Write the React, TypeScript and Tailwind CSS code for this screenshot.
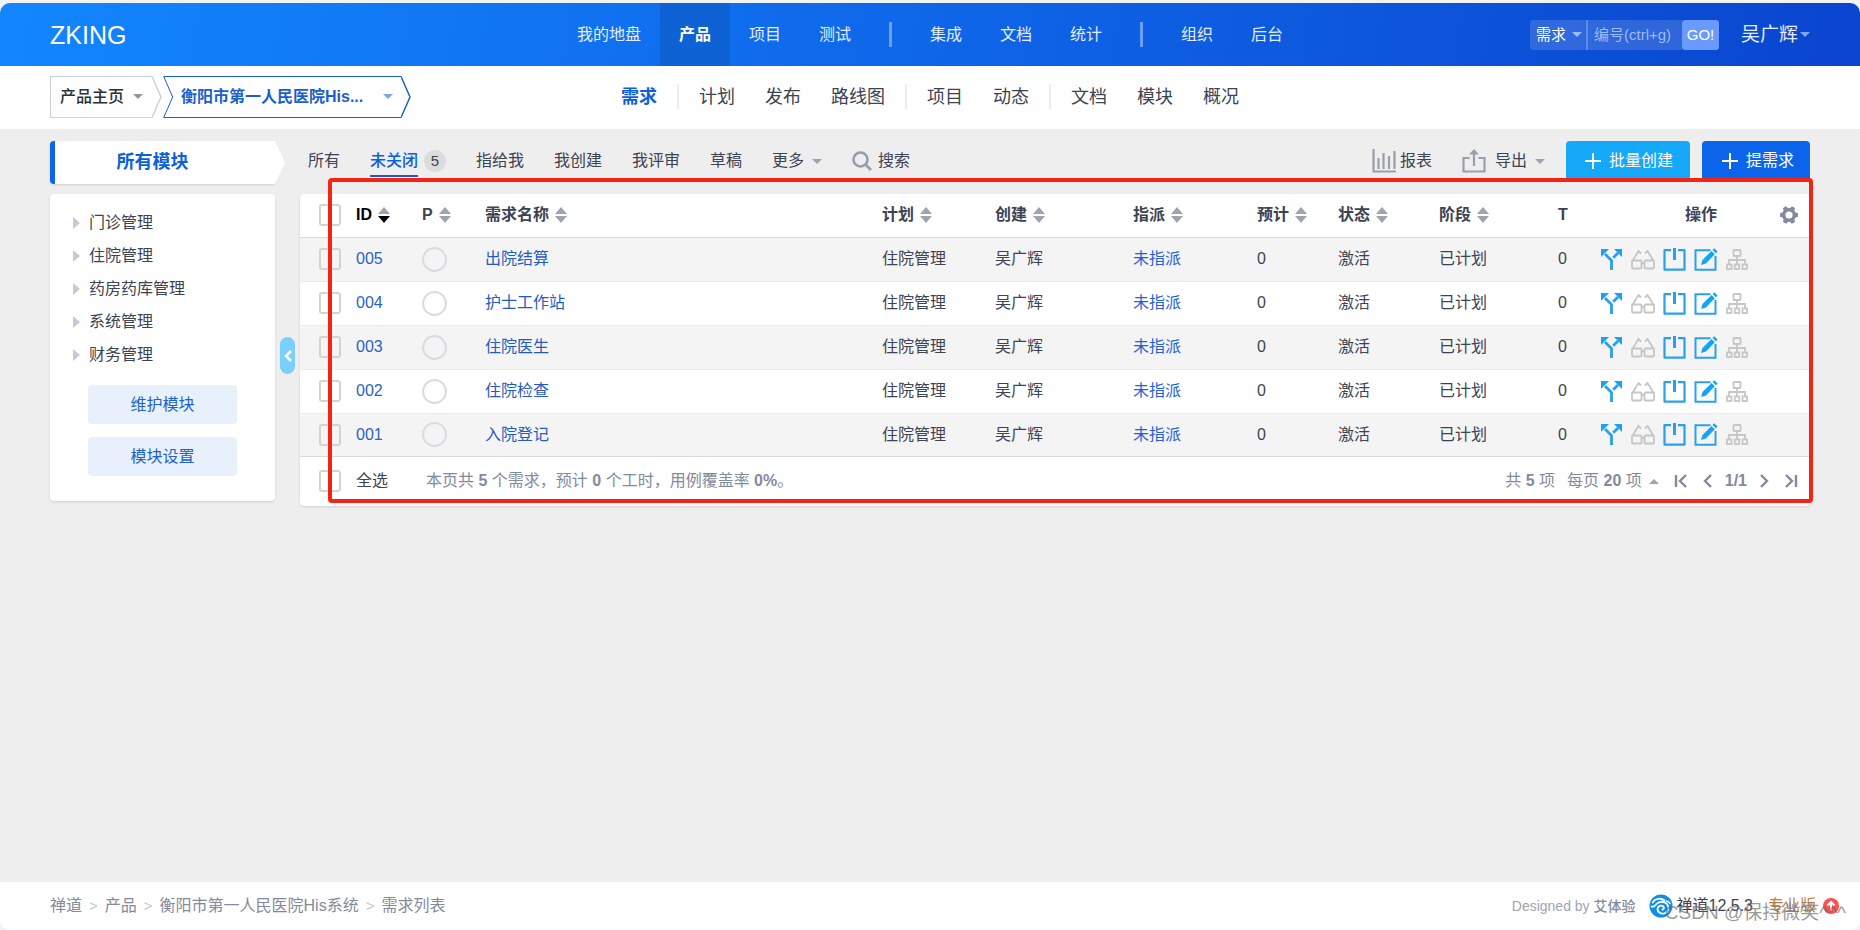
import { useState } from 'react';
import type { ReactNode } from 'react';

type Story = { id: string; title: string; plan: string; author: string };

const stories: Story[] = [
  { id: '005', title: '出院结算', plan: '住院管理', author: '吴广辉' },
  { id: '004', title: '护士工作站', plan: '住院管理', author: '吴广辉' },
  { id: '003', title: '住院医生', plan: '住院管理', author: '吴广辉' },
  { id: '002', title: '住院检查', plan: '住院管理', author: '吴广辉' },
  { id: '001', title: '入院登记', plan: '住院管理', author: '吴广辉' },
];

// null 表示分隔线
const mainNav = ['我的地盘', '产品', '项目', '测试', null, '集成', '文档', '统计', null, '组织', '后台'];
const subNav = ['需求', null, '计划', '发布', '路线图', null, '项目', '动态', null, '文档', '模块', '概况'];
const modules = ['门诊管理', '住院管理', '药房药库管理', '系统管理', '财务管理'];
const tabs = ['指给我', '我创建', '我评审', '草稿'];

function Caret({ className = '', up = false }: { className?: string; up?: boolean }) {
  return (
    <svg viewBox="0 0 10 5" className={`h-[5px] w-[10px] shrink-0 ${className}`} fill="currentColor" aria-hidden="true">
      <path d={up ? 'M0 5h10L5 0z' : 'M0 0h10L5 5z'} />
    </svg>
  );
}

function SortIcon({ active = false }: { active?: boolean }) {
  return (
    <svg viewBox="0 0 12 16" className="h-4 w-3 shrink-0" aria-hidden="true">
      <path d="M6 0l6 7H0z" fill="#9ea3b0" />
      <path d="M0 9h12l-6 7z" fill={active ? '#000' : '#9ea3b0'} />
    </svg>
  );
}

function PlusIcon() {
  return (
    <svg viewBox="0 0 16 16" className="h-4 w-4" stroke="currentColor" strokeWidth="2" aria-hidden="true">
      <path d="M8 0v16M0 8h16" />
    </svg>
  );
}

function Checkbox({ label }: { label: string }) {
  return (
    <input
      type="checkbox"
      aria-label={label}
      className="block h-[22px] w-[22px] appearance-none rounded-[3px] border-2 border-[#d3d3d3] checked:border-[#0c64eb] checked:bg-[#0c64eb]"
    />
  );
}

function ForkIcon() {
  return (
    <svg viewBox="0 0 23 23" className="h-[23px] w-[23px]" aria-hidden="true">
      <path d="M11.5 22v-9.500L5 6M13.200 9.800L18 5" fill="none" stroke="#2b9fec" strokeWidth="2.800" />
      <path d="M1 1h8L1 9zM22 1h-8l8 8z" fill="#16a3f5" />
    </svg>
  );
}

function GlassesIcon() {
  return (
    <svg viewBox="0 0 24 23" className="h-[23px] w-6" fill="none" stroke="#c6c6c6" strokeWidth="1.800" aria-hidden="true">
      <rect x="1" y="12.500" width="9.500" height="8" rx="1" />
      <rect x="13.500" y="12.500" width="9.500" height="8" rx="1" />
      <path d="M10.500 15h3M1.400 13L7.500 3l2.500 2.500M22.600 13L16.500 3 14 5.500" />
    </svg>
  );
}

function CloseIcon() {
  return (
    <svg viewBox="0 0 23 23" className="h-[23px] w-[23px]" fill="none" stroke="#2b9fec" strokeWidth="2.200" aria-hidden="true">
      <path d="M8 2.200H1.500v19.500h20V2.200H15" strokeLinejoin="round" />
      <path d="M11.500 0v12" strokeWidth="3" />
    </svg>
  );
}

function EditIcon() {
  return (
    <svg viewBox="0 0 24 23" className="h-[23px] w-6" fill="none" aria-hidden="true">
      <path d="M16.500 2.200H1.500v19.500h20V8" stroke="#2b9fec" strokeWidth="2" />
      <path d="M7 17l1.500-5L17.500 2.900l3.300 3.300-8.900 9.200zM18.500 1.900L20.200.2l3.400 3.300-1.700 1.700z" fill="#16a3f5" />
    </svg>
  );
}

function TreeIcon() {
  return (
    <svg viewBox="0 0 22 23" className="h-[23px] w-[22px]" fill="none" stroke="#c6c6c6" strokeWidth="1.800" aria-hidden="true">
      <rect x="7.500" y="2" width="7" height="6" rx="0.500" />
      <path d="M11 8v8M3 16v-4h16v4" />
      <rect x="1" y="16.500" width="4.500" height="4.500" />
      <rect x="8.750" y="16.500" width="4.500" height="4.500" />
      <rect x="16.500" y="16.500" width="4.500" height="4.500" />
    </svg>
  );
}

function GearIcon() {
  return (
    <svg viewBox="0 0 20 20" className="h-[18px] w-[18px]" aria-hidden="true">
      <g fill="#838a9d">
        <rect x="7.500" y="0" width="5" height="20" rx="1.200" transform="rotate(30 10 10)" />
        <rect x="7.500" y="0" width="5" height="20" rx="1.200" transform="rotate(90 10 10)" />
        <rect x="7.500" y="0" width="5" height="20" rx="1.200" transform="rotate(150 10 10)" />
        <circle cx="10" cy="10" r="7.800" />
      </g>
      <circle cx="10" cy="10" r="4" fill="#fff" />
    </svg>
  );
}

const actions: { label: string; icon: ReactNode }[] = [
  { label: '变更', icon: <ForkIcon /> },
  { label: '评审', icon: <GlassesIcon /> },
  { label: '关闭', icon: <CloseIcon /> },
  { label: '编辑', icon: <EditIcon /> },
  { label: '分解', icon: <TreeIcon /> },
];

function Th({ children, sort = true, active = false, className = '' }: { children: ReactNode; sort?: boolean; active?: boolean; className?: string }) {
  return (
    <th className={`px-2 text-left font-bold ${active ? 'text-black' : 'text-[#3c4353]'} ${className}`}>
      {sort ? (
        <button className="flex items-center gap-[6px] font-bold">
          {children}
          <SortIcon active={active} />
        </button>
      ) : (
        children
      )}
    </th>
  );
}

function Header() {
  return (
    <header className="grid h-[63px] grid-cols-[1fr_auto_1fr] items-center rounded-t-[10px] bg-[linear-gradient(100deg,#1286ff_0%,#0f69eb_45%,#0a45cf_100%)] px-[50px] text-white">
      <a href="#" className="text-[25px] leading-8">ZKING</a>
      <nav className="flex h-full items-center text-base">
        {mainNav.map((item, i) =>
          item ? (
            <a
              key={item}
              href="#"
              className={`flex h-full items-center px-[19px] ${item === '产品' ? 'bg-[#0f62d4] font-bold' : 'text-[#e3edff]'}`}
            >
              {item}
            </a>
          ) : (
            <span key={i} className="mx-[19px] h-[25px] w-[3px] bg-[#68a0f7]" />
          )
        )}
      </nav>
      <div className="flex items-center justify-end gap-[22px]">
        <form className="flex h-[30px] text-[15px]" onSubmit={(e) => e.preventDefault()}>
          <div className="relative flex items-center rounded-l-[3px] border-r-2 border-[#5c8ae8] bg-white/15">
            <select aria-label="搜索类型" className="h-full w-[56px] appearance-none bg-transparent pl-[6px] outline-none">
              <option>需求</option>
            </select>
            <Caret className="pointer-events-none absolute right-1 text-[#9dbbf3]" />
          </div>
          <input
            aria-label="编号"
            placeholder="编号(ctrl+g)"
            className="w-[94px] bg-white/15 pl-[6px] outline-none placeholder:text-[#9dbbf3]"
          />
          <button className="w-[37px] rounded-[3px] bg-[#6b9aff]">GO!</button>
        </form>
        <button className="flex items-center gap-[2px] text-[19px] text-[#e3edff]">
          吴广辉
          <Caret className="text-[#7ea5ee]" />
        </button>
      </div>
    </header>
  );
}

function SubHeader() {
  return (
    <div className="grid h-[63px] grid-cols-[1fr_auto_1fr] items-center bg-white px-[50px] pb-[2px]">
      <div className="flex h-[42px]">
        <button className="flex h-full text-base font-medium text-[#2b2f36]">
          <span className="flex h-full items-center gap-[9px] border-y border-l border-[#cbd0db] px-[9px]">
            产品主页
            <Caret className="text-[#8f949d]" />
          </span>
          <svg viewBox="0 0 10 42" className="h-full w-[10px]" fill="none" stroke="#cbd0db" strokeWidth="1.500" aria-hidden="true">
            <path d="M0 .5l9 20.500-9 20.500" />
          </svg>
        </button>
        <button className="ml-px flex h-full text-base font-bold text-[#1a5fd0]">
          <svg viewBox="0 0 10 42" className="h-full w-[10px]" fill="none" stroke="#1a5fc8" aria-hidden="true">
            <path d="M10 .5H.7l9 20.500-9 20.500H10" />
          </svg>
          <span className="flex h-full items-center gap-5 border-y border-[#1a5fc8] px-2">
            衡阳市第一人民医院His...
            <Caret className="text-[#7ba5e6]" />
          </span>
          <svg viewBox="0 0 10 42" className="h-full w-[10px]" fill="none" stroke="#1a5fc8" strokeWidth="1.500" aria-hidden="true">
            <path d="M0 .5l9 20.500-9 20.500" />
          </svg>
        </button>
      </div>
      <nav className="flex items-center text-lg text-[#3c4353]">
        {subNav.map((item, i) =>
          item ? (
            <a key={item} href="#" className={`px-[15px] ${item === '需求' ? 'font-bold text-[#0c5fdd]' : ''}`}>
              {item}
            </a>
          ) : (
            <span key={i} className="mx-[5px] h-[25px] w-[2px] bg-[#ececec]" />
          )
        )}
      </nav>
    </div>
  );
}

function Sidebar() {
  return (
    <aside className="w-[225px] shrink-0">
      <div className="relative mb-[10px] flex h-[43px] items-center justify-center rounded-l-[4px] border-l-[5px] border-[#0c64eb] bg-white pb-[2px] pr-[25px] shadow-sm">
        <h2 className="text-lg font-bold text-[#0c5fdd]">所有模块</h2>
        <svg viewBox="0 0 10 43" className="absolute left-full top-0 h-full w-[10px]" fill="#fff" aria-hidden="true">
          <path d="M0 0l10 21.500L0 43z" />
        </svg>
      </div>
      <div className="rounded-[4px] bg-white pb-[25px] pt-3 shadow-sm">
        <ul>
          {modules.map((name) => (
            <li key={name} className="flex h-[33px] items-center gap-[9px] pl-[23px]">
              <svg viewBox="0 0 7 12" className="h-3 w-[7px]" fill="#c4cad6" aria-hidden="true">
                <path d="M0 0l7 6-7 6z" />
              </svg>
              <a href="#">{name}</a>
            </li>
          ))}
        </ul>
        <div className="mx-[38px] mt-[14px] flex flex-col gap-[13px] text-[#1f60c9]">
          <button className="h-[39px] rounded-[4px] bg-[#e8f1fb]">维护模块</button>
          <button className="h-[39px] rounded-[4px] bg-[#e8f1fb]">模块设置</button>
        </div>
      </div>
    </aside>
  );
}

function Toolbar() {
  return (
    <div className="mb-[13px] flex h-10 items-center justify-between">
      <div className="flex items-center gap-[30px] pl-2">
        <a href="#">所有</a>
        <a href="#" className="flex items-center gap-[6px]">
          <span className="border-b-2 border-[#1a5fc8] pb-[2px] pt-1 font-medium text-[#0c5fdd]">未关闭</span>
          <span className="flex h-[22px] w-[22px] items-center justify-center rounded-full bg-[#dcdcdc] text-[15px]">5</span>
        </a>
        {tabs.map((tab) => (
          <a key={tab} href="#">{tab}</a>
        ))}
        <button className="flex items-center gap-2">
          更多
          <Caret className="text-[#9ea3b0]" />
        </button>
        <button className="flex items-center gap-[6px]">
          <svg viewBox="0 0 20 20" className="h-5 w-5" fill="none" stroke="#959cab" strokeWidth="2.600" aria-hidden="true">
            <circle cx="8.500" cy="8.500" r="7" />
            <path d="M13.500 13.500l5.500 5.500" />
          </svg>
          搜索
        </button>
      </div>
      <div className="flex items-center">
        <button className="flex items-center gap-1">
          <svg viewBox="0 0 24 24" className="h-6 w-6" fill="none" stroke="#9aa0aa" strokeWidth="2.200" aria-hidden="true">
            <path d="M1.500 0v22.500H24M6.500 9v11M11.500 4v16M17 7v13M22.500 2v18" />
          </svg>
          报表
        </button>
        <button className="ml-[30px] flex items-center">
          <svg viewBox="0 0 24 24" className="mr-[9px] h-6 w-6" fill="none" stroke="#9aa0aa" strokeWidth="2.200" aria-hidden="true">
            <path d="M7.500 9H1.500v13.500h21V9h-6M12 17V4" />
            <path d="M12 0l5 5.500H7z" fill="#9aa0aa" stroke="none" />
          </svg>
          导出
          <Caret className="ml-2 text-[#9ea3b0]" />
        </button>
        <button className="ml-[21px] flex h-10 items-center gap-2 rounded-[4px] bg-[#16a8f8] pl-[19px] pr-[17px] text-white">
          <PlusIcon />
          批量创建
        </button>
        <button className="ml-3 flex h-10 items-center gap-2 rounded-[4px] bg-[#0c64eb] pl-5 pr-4 text-white">
          <PlusIcon />
          提需求
        </button>
      </div>
    </div>
  );
}

function StoryTable() {
  return (
    <table className="w-full table-fixed border-collapse">
      <colgroup>
        <col className="w-[48px]" />
        <col className="w-[66px]" />
        <col className="w-[63px]" />
        <col />
        <col className="w-[113px]" />
        <col className="w-[138px]" />
        <col className="w-[124px]" />
        <col className="w-[81px]" />
        <col className="w-[101px]" />
        <col className="w-[119px]" />
        <col className="w-[42px]" />
        <col className="w-[218px]" />
      </colgroup>
      <thead>
        <tr className="h-[43px] border-b border-[#d9dbdf]">
          <th className="pl-[19px]"><Checkbox label="选择全部需求" /></th>
          <Th active>ID</Th>
          <Th>P</Th>
          <Th>需求名称</Th>
          <Th>计划</Th>
          <Th>创建</Th>
          <Th>指派</Th>
          <Th>预计</Th>
          <Th>状态</Th>
          <Th>阶段</Th>
          <Th sort={false}>T</Th>
          <th className="relative text-center font-bold text-[#3c4353]">
            操作
            <button aria-label="设置" className="absolute right-3 top-3">
              <GearIcon />
            </button>
          </th>
        </tr>
      </thead>
      <tbody>
        {stories.map((story) => (
          <tr key={story.id} className="h-11 border-b border-[#ececec] last:h-[43px] last:border-[#d9dbdf] odd:bg-[#f4f4f4]">
            <td className="pl-[19px]"><Checkbox label={`选择需求 ${story.id}`} /></td>
            <td className="px-2"><a href="#" className="text-[#2a62c9]">{story.id}</a></td>
            <td className="px-2">
              <span className="block h-[25px] w-[25px] rounded-full border-2 border-[#d8dbe2]" />
            </td>
            <td className="px-2"><a href="#" className="text-[#1f5cc4]">{story.title}</a></td>
            <td className="px-2">{story.plan}</td>
            <td className="px-2">{story.author}</td>
            <td className="px-2"><a href="#" className="text-[#1f63dc]">未指派</a></td>
            <td className="px-2">0</td>
            <td className="px-2">激活</td>
            <td className="px-2">已计划</td>
            <td className="px-2">0</td>
            <td className="pl-2">
              <div className="flex items-center gap-2">
                {actions.map((action) => (
                  <button key={action.label} aria-label={action.label}>{action.icon}</button>
                ))}
              </div>
            </td>
          </tr>
        ))}
      </tbody>
    </table>
  );
}

function PageArrow({ d, label, className = '' }: { d: string; label: string; className?: string }) {
  return (
    <button aria-label={label} className={className}>
      <svg viewBox="0 0 14 14" className="h-[14px] w-[14px]" fill="none" stroke="#838a9d" strokeWidth="2.400" aria-hidden="true">
        <path d={d} />
      </svg>
    </button>
  );
}

function TableFooter() {
  return (
    <div className="flex h-[49px] items-center pl-[19px] pr-3 text-[#838a9d]">
      <Checkbox label="全选" />
      <button className="ml-[15px] text-[#3c4353]">全选</button>
      <p className="ml-[38px] flex-1">
        本页共 <b>5</b> 个需求，预计 <b>0</b> 个工时，用例覆盖率 <b>0%</b>。
      </p>
      <span>共 <b>5</b> 项</span>
      <button className="ml-3 flex items-center gap-[7px]">
        <span>每页 <b>20</b> 项</span>
        <Caret up className="text-[#9ea3b0]" />
      </button>
      <PageArrow label="首页" d="M2 1v12M12 1L6 7l6 6" className="ml-[15px]" />
      <PageArrow label="上一页" d="M10 1L4 7l6 6" className="ml-[13px]" />
      <b className="ml-[10px]">1/1</b>
      <PageArrow label="下一页" d="M4 1l6 6-6 6" className="ml-[10px]" />
      <PageArrow label="末页" d="M2 1l6 6-6 6M12 1v12" className="ml-[13px]" />
    </div>
  );
}

function Footer() {
  const crumbs = ['禅道', '产品', '衡阳市第一人民医院His系统', '需求列表'];
  return (
    <footer className="relative flex h-12 items-center justify-between rounded-b-[10px] bg-white pl-[50px] pr-[21px] text-[#838a9d]">
      <nav className="flex items-center gap-[7px]">
        {crumbs.map((crumb, i) => (
          <span key={crumb} className="flex items-center gap-[7px]">
            {i > 0 && <span className="text-[15px] text-[#c4c7cf]">&gt;</span>}
            <a href="#">{crumb}</a>
          </span>
        ))}
      </nav>
      <div className="flex items-center">
        <span className="text-sm text-[#a0a4b0]">
          Designed by <a href="#" className="font-medium text-[#838a9d]">艾体验</a>
        </span>
        <svg viewBox="0 0 24 24" className="ml-[14px] mr-[3px] h-6 w-6" fill="none" stroke="#fff" strokeLinecap="round" aria-hidden="true">
          <circle cx="12" cy="12" r="11.500" fill="#0c8df0" stroke="none" />
          <path d="M3.500 8.500C6 4.500 12 3.500 15.500 6.500" strokeWidth="1.800" />
          <path
            d="M2.500 12.500c2 1 3.500-.5 5-2.500 2.500-3 8-3 10.500 0 2.600 3.300 1.400 8-2.500 9.300-3.500 1-7-1-7-4 0-2.600 2.500-4.300 4.800-3.500 2 .8 2 3.200.2 3.900"
            strokeWidth="1.900"
          />
          <path d="M17.500 7c1.500.3 2.800 1.200 3.500 2.500" strokeWidth="1.500" />
        </svg>
        <a href="#" className="text-[#3c4353]">禅道12.5.3</a>
        <a href="#" className="ml-[15px] text-[#b98046]">专业版</a>
        <svg viewBox="0 0 16 16" className="ml-[7px] h-4 w-4" aria-hidden="true">
          <circle cx="8" cy="8" r="8" fill="#ff5050" />
          <path d="M8 12.500V5M4.500 7.500L8 4l3.500 3.500" stroke="#fff" strokeWidth="2" fill="none" />
        </svg>
      </div>
      <span className="pointer-events-none absolute bottom-1 right-[14px] text-[19px] leading-[26px] text-[#6e6e6e]/70">
        CSDN @保持微笑^^^
      </span>
    </footer>
  );
}

export default function App() {
  const [collapsed, setCollapsed] = useState(false);

  return (
    <div className="flex min-h-screen flex-col bg-[#f1f4f6] pt-[3px] font-['Liberation_Sans','Noto_Sans_CJK_SC',sans-serif] text-base leading-6 text-[#3c4353]">
      <Header />
      <SubHeader />
      <main className="flex flex-1 items-start bg-[#eeeeee] px-[50px] pt-3">
        {!collapsed && <Sidebar />}
        <button
          aria-label="折叠侧栏"
          onClick={() => setCollapsed(!collapsed)}
          className="mx-[5px] mt-[196px] flex h-[37px] w-[15px] shrink-0 items-center justify-center rounded-full bg-[#7bcffc]"
        >
          <svg viewBox="0 0 8 12" className="h-3 w-2" fill="none" stroke="#fff" strokeWidth="2.500" aria-hidden="true">
            <path d="M7 1L2 6l5 5" />
          </svg>
        </button>
        <section className="relative min-w-0 flex-1">
          <Toolbar />
          <div className="rounded-[4px] bg-white shadow-sm">
            <StoryTable />
            <TableFooter />
          </div>
          {/* 红色标注框 */}
          <div className="pointer-events-none absolute -right-[3px] bottom-[3px] left-7 top-[37px] rounded-[4px] border-4 border-[#f52314]" />
        </section>
      </main>
      <Footer />
    </div>
  );
}
